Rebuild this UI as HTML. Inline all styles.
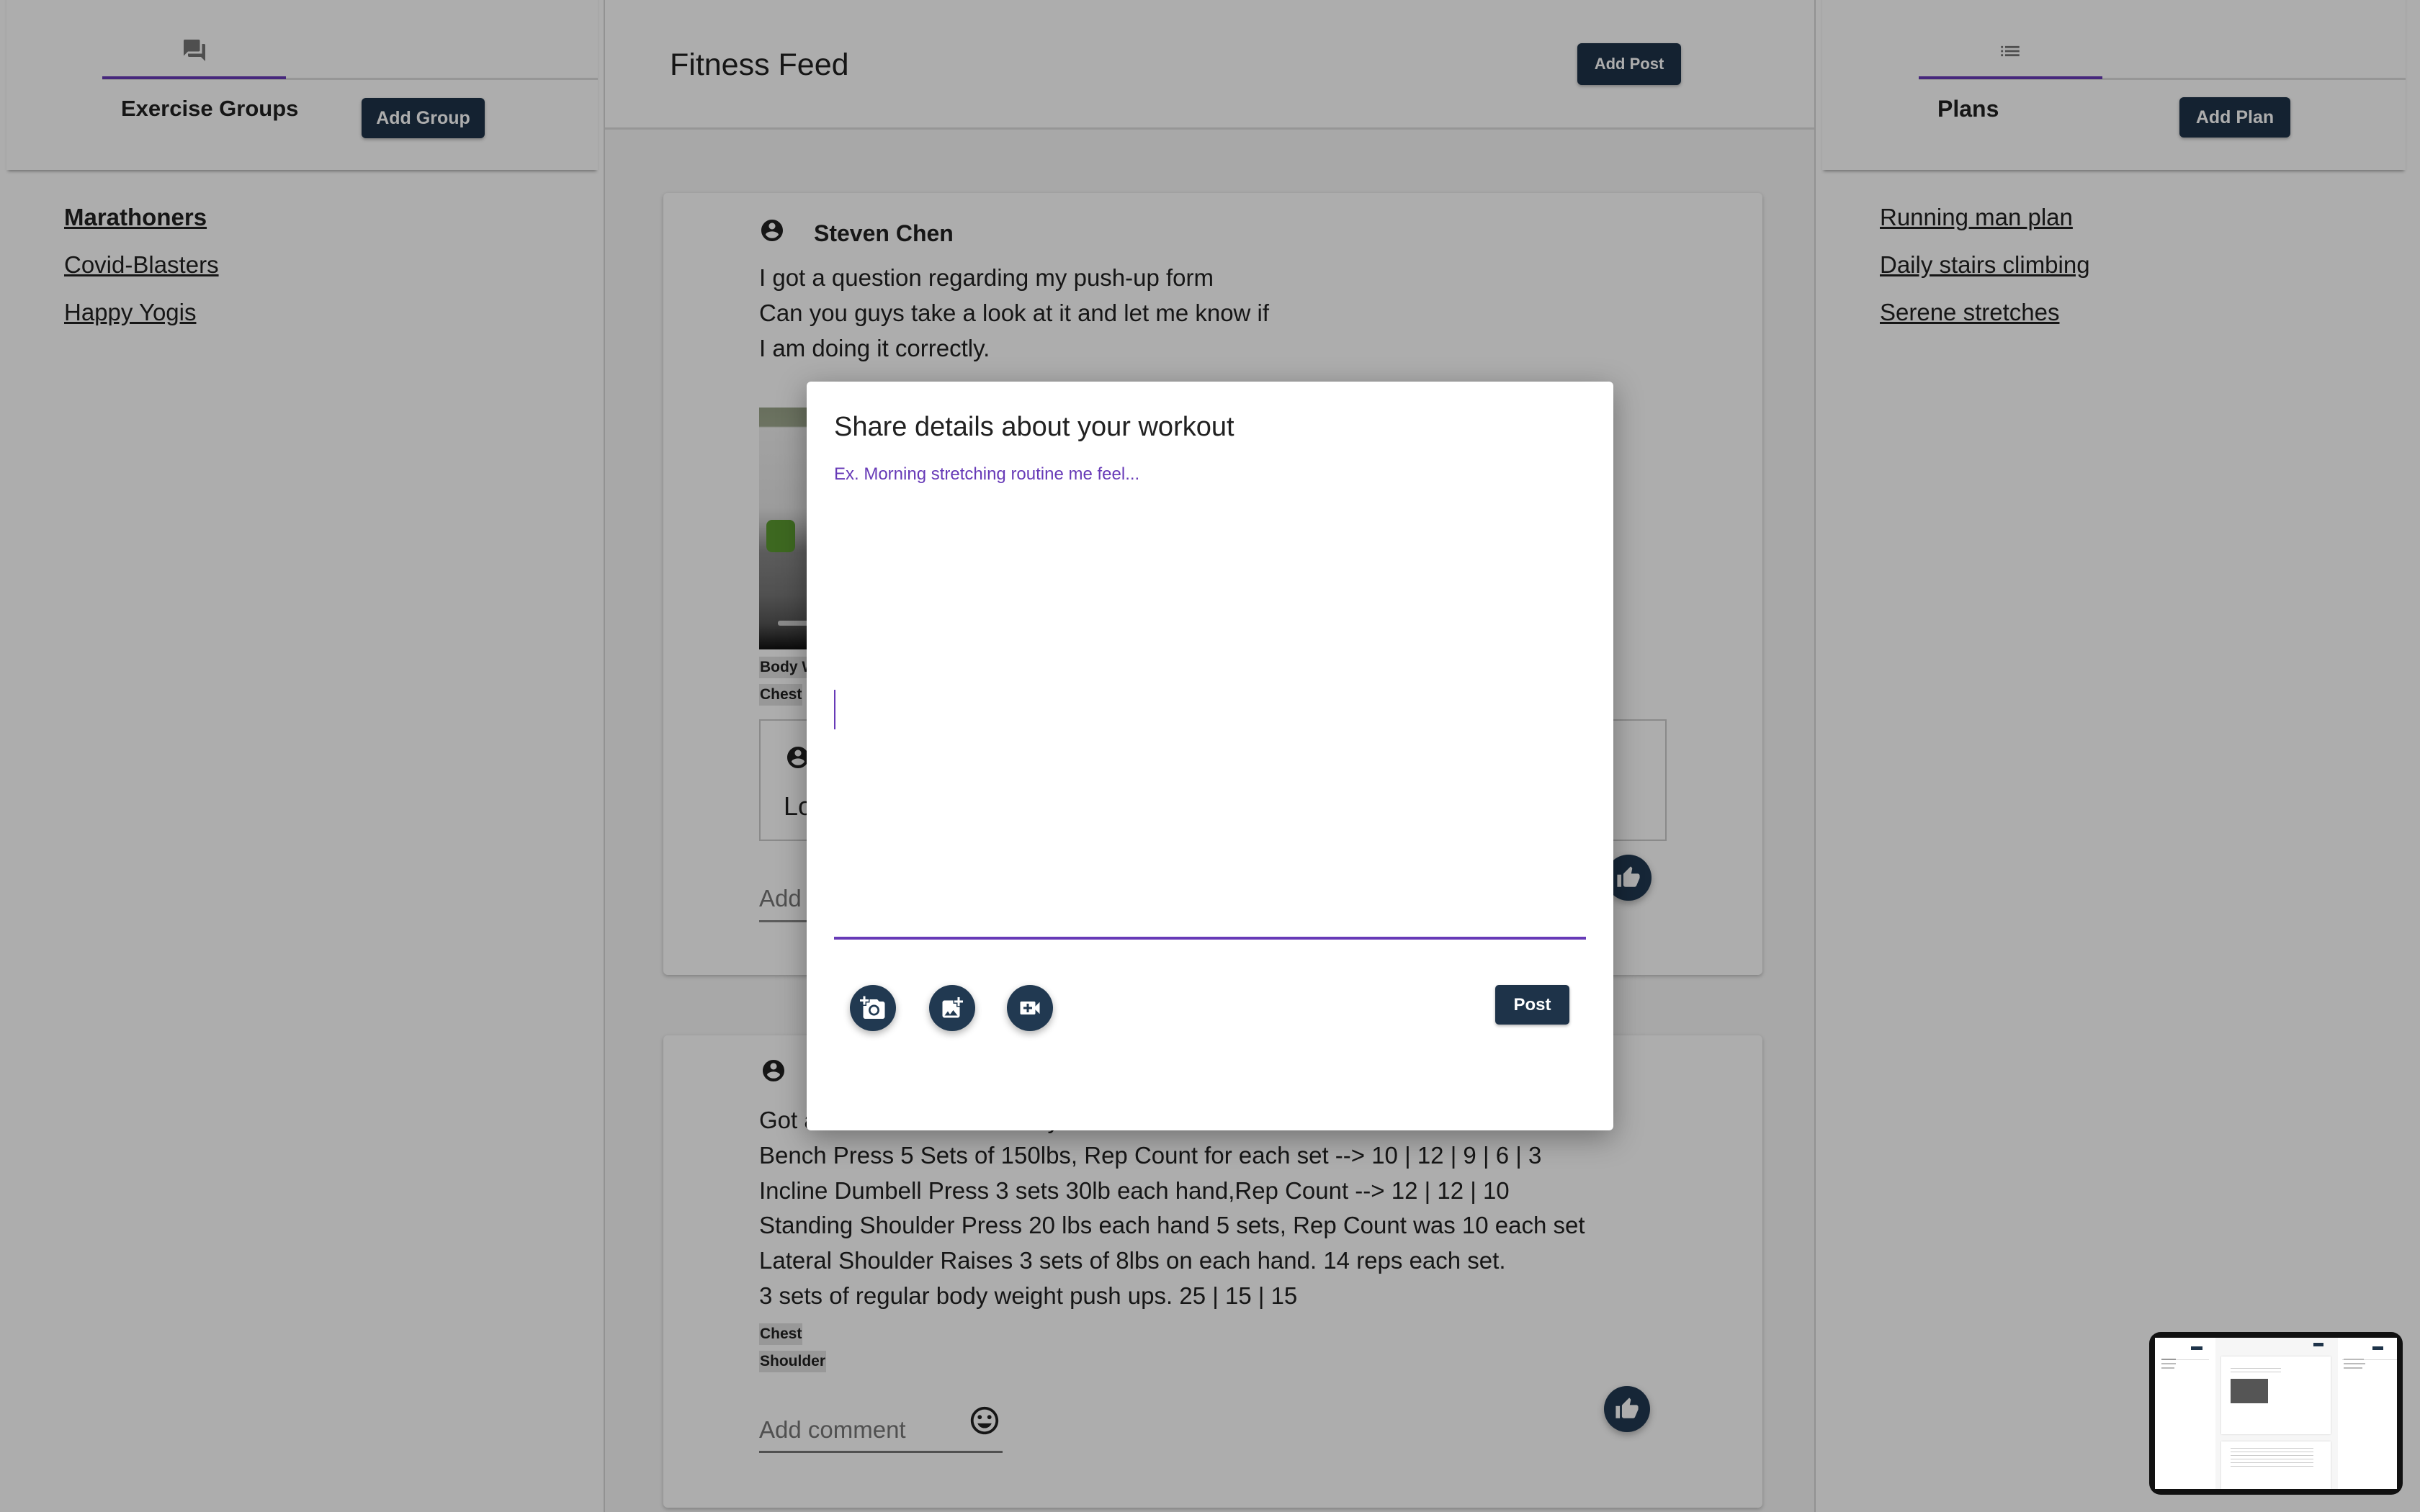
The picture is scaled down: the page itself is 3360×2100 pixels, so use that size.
<!DOCTYPE html>
<html><head><meta charset="utf-8"><style>
*{margin:0;padding:0;box-sizing:border-box}
body{width:3360px;height:2100px;position:relative;overflow:hidden;background:#fff;font-family:"Liberation Sans",sans-serif;color:#212121}
.a{position:absolute}
.btn{position:absolute;background:#1e3349;color:#fff;border-radius:6px;font-weight:bold;font-size:22px;display:flex;align-items:center;justify-content:center;box-shadow:0 2px 4px rgba(0,0,0,.3)}
.link{position:absolute;font-size:33px;text-decoration:underline;color:#212121;line-height:40px}
.card{position:absolute;background:#fff;border-radius:6px;box-shadow:0 2px 6px rgba(0,0,0,.25)}
.hcard{position:absolute;background:#fff;box-shadow:0 4px 4px -2px rgba(0,0,0,.35)}
.t{position:absolute;font-size:32px;line-height:40px;white-space:nowrap}
.tag{position:absolute;font-size:21px;font-weight:bold;background:#e0e0e0;padding:2px 1px;line-height:26px}
.circ{position:absolute;border-radius:50%;background:#213951;box-shadow:0 4px 10px rgba(0,0,0,.3);display:flex;align-items:center;justify-content:center}
</style></head><body>
<!-- left panel -->
<div class="a" style="left:838px;top:0;width:2px;height:2100px;background:#d8d8d8"></div>
<div class="a" style="left:2519px;top:0;width:2px;height:2100px;background:#d8d8d8"></div>
<div class="hcard" style="left:9px;top:-10px;width:821px;height:246px"></div>
<svg class="a" style="left:252px;top:52px" width="36" height="36" viewBox="0 0 24 24"><path fill="#757575" d="M21 6h-2v9H6v2c0 .55.45 1 1 1h11l4 4V7c0-.55-.45-1-1-1zm-4 6V3c0-.55-.45-1-1-1H3c-.55 0-1 .45-1 1v14l4-4h10c.55 0 1-.45 1-1z"/></svg>
<div class="a" style="left:142px;top:108px;width:688px;height:3px;background:#ddd"></div>
<div class="a" style="left:142px;top:106px;width:255px;height:4px;background:#673ab7"></div>
<div class="t" style="left:168px;top:131px;font-size:31px;font-weight:bold">Exercise Groups</div>
<div class="btn" style="left:502px;top:136px;width:171px;height:56px;font-size:25px">Add Group</div>
<div class="link" style="left:89px;top:282px;font-weight:bold">Marathoners</div>
<div class="link" style="left:89px;top:348px">Covid-Blasters</div>
<div class="link" style="left:89px;top:414px">Happy Yogis</div>

<!-- center -->
<div class="a" style="left:840px;top:0;width:1679px;height:2100px;background:#f8f8f8"></div>
<div class="a" style="left:840px;top:0;width:1679px;height:180px;background:#fff;border-bottom:3px solid #ddd"></div>
<div class="t" style="left:930px;top:64px;font-size:43px;line-height:52px">Fitness Feed</div>
<div class="btn" style="left:2190px;top:60px;width:144px;height:58px;font-size:22px">Add Post</div>

<div class="card" style="left:921px;top:268px;width:1526px;height:1086px"></div>
<svg class="a" style="left:1054px;top:302px" width="36" height="36" viewBox="0 0 24 24"><path fill="#212121" d="M12 2C6.48 2 2 6.48 2 12s4.48 10 10 10 10-4.48 10-10S17.52 2 12 2zm0 3c1.66 0 3 1.34 3 3s-1.34 3-3 3-3-1.34-3-3 1.34-3 3-3zm0 14.2c-2.5 0-4.71-1.28-6-3.22.03-1.990 4-3.08 6-3.08 1.99 0 5.97 1.09 6 3.08-1.29 1.94-3.5 3.22-6 3.22z"/></svg>
<div class="t" style="left:1130px;top:304px;font-weight:bold;font-size:32px">Steven Chen</div>
<div class="t" style="left:1054px;top:361px;font-size:33px;line-height:49px">I got a question regarding my push-up form<br>Can you guys take a look at it and let me know if<br>I am doing it correctly.</div>
<div class="a" style="left:1054px;top:566px;width:513px;height:336px;background:linear-gradient(#9aa58a 0,#a0aa90 26px,#f0f0f0 28px,#e6e6e6 140px,#ccc 160px,#888 200px,#777 260px,#555 300px,#111 336px)"></div>
<div class="a" style="left:1064px;top:722px;width:40px;height:45px;background:#5a9a30;border-radius:8px"></div>
<div class="a" style="left:1080px;top:862px;width:200px;height:7px;background:#ccc;border-radius:3px"></div>
<div class="tag" style="left:1054px;top:912px">Body Weight Exercise</div>
<div class="tag" style="left:1054px;top:950px">Chest</div>
<div class="a" style="left:1054px;top:999px;width:1260px;height:169px;border:2px solid #ccc"></div>
<svg class="a" style="left:1090px;top:1034px" width="36" height="36" viewBox="0 0 24 24"><path fill="#212121" d="M12 2C6.48 2 2 6.48 2 12s4.48 10 10 10 10-4.48 10-10S17.52 2 12 2zm0 3c1.66 0 3 1.34 3 3s-1.34 3-3 3-3-1.34-3-3 1.34-3 3-3zm0 14.2c-2.5 0-4.71-1.28-6-3.22.03-1.99 4-3.08 6-3.08 1.99 0 5.97 1.09 6 3.08-1.29 1.94-3.5 3.22-6 3.22z"/></svg>
<div class="t" style="left:1088px;top:1100px;font-size:36px">Looks great Steven!</div>
<div class="t" style="left:1054px;top:1228px;font-size:33px;color:#777">Add comment</div>
<div class="a" style="left:1054px;top:1278px;width:338px;height:3px;background:#888"></div>
<div class="circ" style="left:2229px;top:1187px;width:64px;height:64px"><svg width="34" height="34" viewBox="0 0 24 24"><path fill="#fff" d="M1 21h4V9H1v12zm22-11c0-1.1-.9-2-2-2h-6.31l.95-4.57.03-.32c0-.41-.17-.79-.44-1.060L14.17 1 7.59 7.59C7.22 7.95 7 8.45 7 9v10c0 1.1.9 2 2 2h9c.83 0 1.54-.5 1.84-1.22l3.02-7.05c.09-.23.14-.47.14-.73v-2z"/></svg></div>

<div class="card" style="left:921px;top:1438px;width:1526px;height:656px"></div>
<svg class="a" style="left:1056px;top:1469px" width="36" height="36" viewBox="0 0 24 24"><path fill="#212121" d="M12 2C6.48 2 2 6.48 2 12s4.48 10 10 10 10-4.48 10-10S17.52 2 12 2zm0 3c1.66 0 3 1.34 3 3s-1.34 3-3 3-3-1.34-3-3 1.34-3 3-3zm0 14.2c-2.5 0-4.71-1.28-6-3.22.03-1.99 4-3.08 6-3.08 1.99 0 5.97 1.09 6 3.08-1.29 1.94-3.5 3.22-6 3.22z"/></svg>
<div class="t" style="left:1130px;top:1471px;font-weight:bold">Bob Lopez</div>
<div class="t" style="left:1054px;top:1532px;font-size:33px;line-height:48.8px">Got a Fine Workout in Today<br>Bench Press 5 Sets of 150lbs, Rep Count for each set --&gt; 10 | 12 | 9 | 6 | 3<br>Incline Dumbell Press 3 sets 30lb each hand,Rep Count --&gt; 12 | 12 | 10<br>Standing Shoulder Press 20 lbs each hand 5 sets, Rep Count was 10 each set<br>Lateral Shoulder Raises 3 sets of 8lbs on each hand. 14 reps each set.<br>3 sets of regular body weight push ups. 25 | 15 | 15</div>
<div class="tag" style="left:1054px;top:1838px">Chest</div>
<div class="tag" style="left:1054px;top:1876px">Shoulder</div>
<div class="t" style="left:1054px;top:1966px;font-size:33px;color:#777">Add comment</div>
<div class="a" style="left:1054px;top:2015px;width:338px;height:3px;background:#777"></div>
<svg class="a" style="left:1344px;top:1950px" width="46" height="46" viewBox="0 0 24 24"><path fill="#212121" d="M11.99 2C6.47 2 2 6.48 2 12s4.47 10 9.99 10C17.52 22 22 17.52 22 12S17.52 2 11.99 2zM12 20c-4.42 0-8-3.58-8-8s3.58-8 8-8 8 3.58 8 8-3.58 8-8 8zm3.5-9c.83 0 1.5-.67 1.5-1.5S16.33 8 15.5 8 14 8.67 14 9.5s.67 1.5 1.5 1.5zm-7 0c.83 0 1.5-.67 1.5-1.5S9.33 8 8.5 8 7 8.67 7 9.5 7.67 11 8.5 11zm3.5 6.5c2.33 0 4.31-1.46 5.11-3.5H6.89c.8 2.04 2.78 3.5 5.110 3.5z"/></svg>
<div class="circ" style="left:2227px;top:1925px;width:64px;height:64px"><svg width="34" height="34" viewBox="0 0 24 24"><path fill="#fff" d="M1 21h4V9H1v12zm22-11c0-1.1-.9-2-2-2h-6.31l.95-4.57.03-.32c0-.41-.17-.79-.44-1.06L14.17 1 7.59 7.59C7.22 7.95 7 8.45 7 9v10c0 1.1.9 2 2 2h9c.83 0 1.54-.5 1.84-1.22l3.02-7.05c.09-.23.14-.47.14-.73v-2z"/></svg></div>

<!-- right -->
<div class="hcard" style="left:2530px;top:-10px;width:810px;height:246px"></div>
<svg class="a" style="left:2774px;top:54px" width="34" height="34" viewBox="0 0 24 24"><path fill="#757575" d="M3 13h2v-2H3v2zm0 4h2v-2H3v2zm0-8h2V7H3v2zm4 4h14v-2H7v2zm0 4h14v-2H7v2zM7 7v2h14V7H7z"/></svg>
<div class="a" style="left:2664px;top:108px;width:676px;height:3px;background:#ddd"></div>
<div class="a" style="left:2664px;top:106px;width:255px;height:4px;background:#673ab7"></div>
<div class="t" style="left:2690px;top:131px;font-size:32px;font-weight:bold">Plans</div>
<div class="btn" style="left:3026px;top:135px;width:154px;height:56px;font-size:25px">Add Plan</div>
<div class="link" style="left:2610px;top:282px">Running man plan</div>
<div class="link" style="left:2610px;top:348px">Daily stairs climbing</div>
<div class="link" style="left:2610px;top:414px">Serene stretches</div>

<!-- overlay -->
<div class="a" style="left:0;top:0;width:3360px;height:2100px;background:rgba(0,0,0,.32)"></div>

<!-- modal -->
<div class="a" style="left:1120px;top:530px;width:1120px;height:1040px;background:#fff;border-radius:6px;box-shadow:0 10px 40px rgba(0,0,0,.35)"></div>
<div class="t" style="left:1158px;top:570px;font-size:38px;line-height:46px">Share details about your workout</div>
<div class="t" style="left:1158px;top:644px;font-size:24px;line-height:30px;color:#673ab7">Ex. Morning stretching routine me feel...</div>
<div class="a" style="left:1158px;top:958px;width:2px;height:55px;background:#673ab7"></div>
<div class="a" style="left:1158px;top:1301px;width:1044px;height:4px;background:#673ab7"></div>
<div class="circ" style="left:1180px;top:1368px;width:64px;height:64px"><svg width="36" height="36" viewBox="0 0 24 24"><path fill="#fff" d="M3 4V1h2v3h3v2H5v3H3V6H0V4h3zm3 6V7h3V4h7l1.83 2H21c1.1 0 2 .9 2 2v12c0 1.1-.9 2-2 2H5c-1.1 0-2-.9-2-2V10h3zm7 9c2.76 0 5-2.24 5-5s-2.24-5-5-5-5 2.24-5 5 2.24 5 5 5zm-3.2-5c0 1.77 1.43 3.2 3.2 3.2s3.2-1.43 3.2-3.2-1.43-3.2-3.2-3.2-3.2 1.43-3.2 3.2z"/></svg></div>
<div class="circ" style="left:1290px;top:1368px;width:64px;height:64px"><svg width="36" height="36" viewBox="0 0 24 24"><path fill="#fff" d="M19 7v2.99s-1.99.01-2 0V7h-3s.01-1.99 0-2h3V2h2v3h3v2h-3zm-3 4V8h-3V5H5c-1.1 0-2 .9-2 2v12c0 1.1.9 2 2 2h12c1.1 0 2-.9 2-2v-8h-3zM5 19l3-4 2 3 3-4 4 5H5z"/></svg></div>
<div class="circ" style="left:1398px;top:1368px;width:64px;height:64px"><svg width="36" height="36" viewBox="0 0 24 24"><path fill="#fff" d="M17 10.5V7c0-.55-.45-1-1-1H4c-.55 0-1 .45-1 1v10c0 .55.45 1 1 1h12c.55 0 1-.45 1-1v-3.5l4 4v-11l-4 4zM14 13h-3v3H9v-3H6v-2h3V8h2v3h3v2z"/></svg></div>
<div class="btn" style="left:2076px;top:1368px;width:103px;height:55px;font-size:24px;border-radius:5px">Post</div>

<!-- minimap -->
<div class="a" style="left:2984px;top:1850px;width:352px;height:226px;background:#111;border-radius:16px"></div>
<div class="a" style="left:2992px;top:1858px;width:336px;height:210px;background:#fff;overflow:hidden">
  <div class="a" style="left:84px;top:0;width:170px;height:210px;background:#f6f6f6"></div>
  <div class="a" style="left:92px;top:26px;width:152px;height:108px;background:#fff;box-shadow:0 0 2px #ccc"></div>
  <div class="a" style="left:92px;top:144px;width:152px;height:66px;background:#fff;box-shadow:0 0 2px #ccc"></div>
  <div class="a" style="left:105px;top:57px;width:52px;height:34px;background:#555"></div>
  <div class="a" style="left:10px;top:30px;width:65px;height:1px;background:#ddd"></div>
  <div class="a" style="left:260px;top:30px;width:76px;height:1px;background:#ddd"></div>
  <div class="a" style="left:50px;top:12px;width:16px;height:5px;background:#1e3349"></div>
  <div class="a" style="left:220px;top:7px;width:14px;height:5px;background:#1e3349"></div>
  <div class="a" style="left:302px;top:12px;width:15px;height:5px;background:#1e3349"></div>
  <div class="a" style="left:9px;top:29px;width:20px;height:2px;background:#999"></div>
  <div class="a" style="left:9px;top:35px;width:20px;height:2px;background:#bbb"></div>
  <div class="a" style="left:9px;top:41px;width:18px;height:2px;background:#bbb"></div>
  <div class="a" style="left:262px;top:29px;width:28px;height:2px;background:#bbb"></div>
  <div class="a" style="left:262px;top:35px;width:30px;height:2px;background:#bbb"></div>
  <div class="a" style="left:262px;top:41px;width:26px;height:2px;background:#bbb"></div>
  <div class="a" style="left:105px;top:42px;width:70px;height:10px;background:repeating-linear-gradient(#ccc 0 1px,transparent 1px 5px)"></div>
  <div class="a" style="left:105px;top:153px;width:115px;height:30px;background:repeating-linear-gradient(#ccc 0 1px,transparent 1px 5px)"></div>
</div>
</body></html>
